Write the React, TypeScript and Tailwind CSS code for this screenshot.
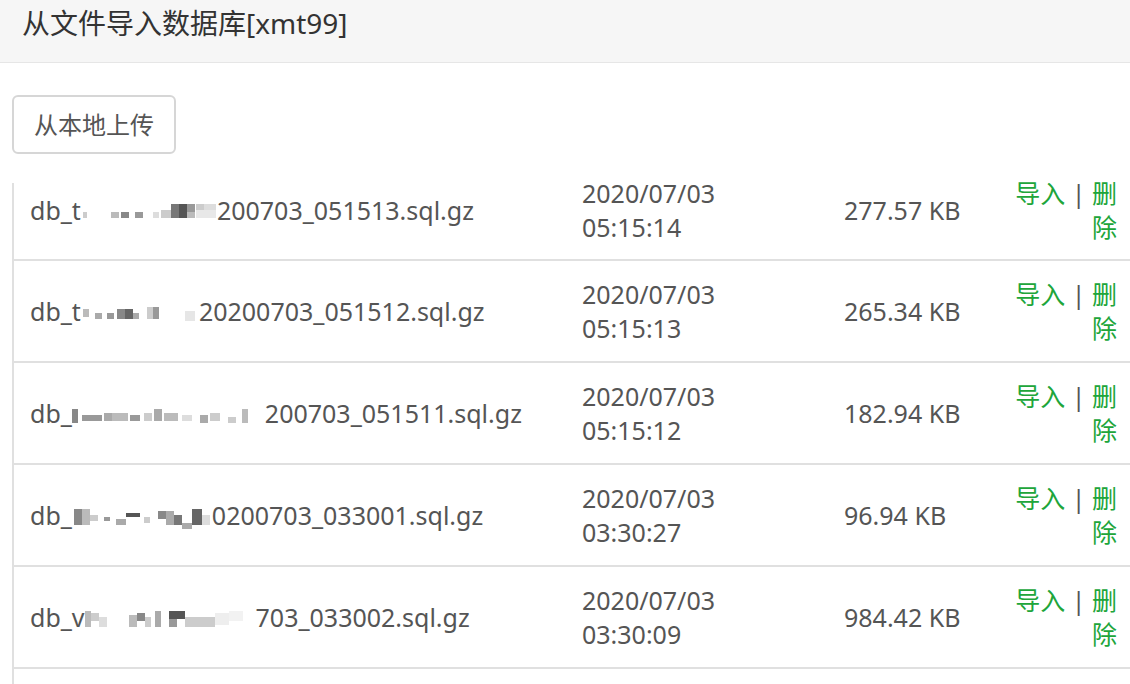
type Block = [number, number, number, number, string];

type Backup = {
  prefix: string;
  mosaic: { w: number; blocks: Block[] };
  suffix: string;
  date: string;
  time: string;
  size: string;
};

const backups: Backup[] = [
  {
    prefix: "db_t",
    mosaic: {
      w: 136,
      blocks: [
        [2, 12, 4, 6, "#ccc"],
        [30, 12, 8, 6, "#bbb"],
        [40, 12, 8, 6, "#888"],
        [54, 12, 8, 6, "#999"],
        [72, 12, 6, 6, "#ddd"],
        [80, 10, 10, 8, "#ccc"],
        [90, 4, 8, 14, "#777"],
        [98, 4, 8, 14, "#555"],
        [106, 4, 8, 8, "#999"],
        [106, 12, 8, 6, "#bbb"],
        [115, 4, 8, 6, "#ccc"],
        [123, 4, 12, 6, "#ddd"],
        [115, 10, 20, 8, "#e8e8e8"],
      ],
    },
    suffix: "200703_051513.sql.gz",
    date: "2020/07/03",
    time: "05:15:14",
    size: "277.57 KB",
  },
  {
    prefix: "db_t",
    mosaic: {
      w: 118,
      blocks: [
        [2, 8, 6, 8, "#bbb"],
        [14, 12, 7, 6, "#aaa"],
        [26, 12, 7, 6, "#999"],
        [36, 8, 8, 10, "#888"],
        [44, 8, 8, 10, "#666"],
        [52, 12, 6, 6, "#aaa"],
        [66, 6, 6, 12, "#ccc"],
        [72, 6, 6, 12, "#999"],
        [104, 10, 10, 10, "#e6e6e6"],
      ],
    },
    suffix: "20200703_051512.sql.gz",
    date: "2020/07/03",
    time: "05:15:13",
    size: "265.34 KB",
  },
  {
    prefix: "db_",
    mosaic: {
      w: 193,
      blocks: [
        [0, 6, 6, 14, "#888"],
        [10, 12, 20, 6, "#999"],
        [32, 10, 8, 8, "#aaa"],
        [40, 10, 16, 8, "#bbb"],
        [58, 12, 10, 6, "#999"],
        [72, 10, 8, 8, "#ccc"],
        [82, 6, 8, 12, "#aaa"],
        [92, 10, 14, 8, "#bbb"],
        [110, 12, 10, 6, "#ddd"],
        [128, 12, 8, 8, "#aaa"],
        [138, 10, 10, 8, "#ccc"],
        [156, 14, 8, 6, "#ccc"],
        [170, 6, 6, 14, "#bbb"],
      ],
    },
    suffix: "200703_051511.sql.gz",
    date: "2020/07/03",
    time: "05:15:12",
    size: "182.94 KB",
  },
  {
    prefix: "db_",
    mosaic: {
      w: 140,
      blocks: [
        [2, 4, 8, 16, "#888"],
        [10, 4, 8, 16, "#bbb"],
        [18, 10, 8, 6, "#ccc"],
        [32, 12, 6, 4, "#999"],
        [44, 14, 10, 6, "#aaa"],
        [54, 8, 14, 4, "#555"],
        [72, 12, 6, 6, "#ccc"],
        [86, 6, 8, 8, "#888"],
        [94, 6, 8, 14, "#aaa"],
        [102, 10, 8, 10, "#777"],
        [110, 18, 10, 6, "#aaa"],
        [120, 4, 10, 16, "#666"],
        [130, 10, 8, 10, "#ddd"],
      ],
    },
    suffix: "0200703_033001.sql.gz",
    date: "2020/07/03",
    time: "03:30:27",
    size: "96.94 KB",
  },
  {
    prefix: "db_v",
    mosaic: {
      w: 171,
      blocks: [
        [0, 4, 6, 16, "#bbb"],
        [6, 6, 8, 8, "#ccc"],
        [14, 10, 8, 10, "#ddd"],
        [44, 8, 8, 12, "#bbb"],
        [52, 6, 8, 8, "#888"],
        [60, 10, 6, 10, "#ccc"],
        [70, 4, 6, 16, "#aaa"],
        [84, 4, 16, 8, "#555"],
        [84, 12, 8, 8, "#999"],
        [100, 10, 30, 10, "#ccc"],
        [130, 6, 14, 12, "#eee"],
        [144, 4, 14, 10, "#f2f2f2"],
      ],
    },
    suffix: "703_033002.sql.gz",
    date: "2020/07/03",
    time: "03:30:09",
    size: "984.42 KB",
  },
  {
    prefix: "",
    mosaic: { w: 0, blocks: [] },
    suffix: "",
    date: "",
    time: "",
    size: "",
  },
];

const Mosaic = ({ w, blocks }: { w: number; blocks: Block[] }) => (
  <svg width={w} height={24} viewBox={`0 0 ${w} 24`} className="inline-block align-[-4px]">
    {blocks.map(([x, y, bw, bh, c], i) => (
      <rect key={i} x={x} y={y} width={bw} height={bh} fill={c} />
    ))}
  </svg>
);

export default function App() {
  return (
    <div className="w-[1130px] h-[684px] overflow-hidden bg-white text-[#555] font-['Noto_Sans','Noto_Sans_CJK_SC',sans-serif]">
      {/* title bar */}
      <div className="h-[63px] bg-[#f6f6f6] border-b border-[#e6e6e6] pl-[22px]">
        <h1 className="text-[28px] leading-[46px] text-[#333]">从文件导入数据库[xmt99]</h1>
      </div>

      <div className="pl-[12px] pt-[32px]">
        <button className="w-[164px] h-[59px] rounded-[6px] border-2 border-[#d6d6d6] bg-white text-[24px] text-[#555]">
          从本地上传
        </button>
      </div>

      {/* backup list; first row is scrolled partly out of view */}
      <div className="mt-[29px] ml-[12px] border-l-2 border-[#e0e0e0] w-[1120px]">
        {backups.map((b, i) => (
          <div
            key={i}
            className={
              "grid grid-cols-[552px_262px_172px_134px] items-center border-b-2 border-[#e0e0e0] text-[25px] leading-[34px] " +
              (i === 0 ? "h-[78px] grid-rows-[54px]" : "h-[102px]")
            }
          >
            <div className="pl-[16px] whitespace-nowrap">
              {b.prefix}
              {b.mosaic.w > 0 && <Mosaic w={b.mosaic.w} blocks={b.mosaic.blocks} />}
              {b.suffix}
            </div>
            <div className="pl-[16px]">
              {b.date && (
                <>
                  <div>{b.date}</div>
                  <div>{b.time}</div>
                </>
              )}
            </div>
            <div className="pl-[16px]">{b.size}</div>
            <div className="pr-[17px] pl-[14px] text-right">
              {b.size && (
                <>
                  <a className="text-[#20a53a] cursor-pointer">导入</a>
                  <span className="text-[#555]"> | </span>
                  <a className="text-[#20a53a] cursor-pointer">删除</a>
                </>
              )}
            </div>
          </div>
        ))}
      </div>
    </div>
  );
}
